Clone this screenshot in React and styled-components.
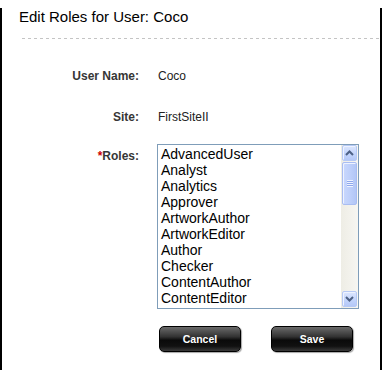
import React from 'react';
import styled, { createGlobalStyle } from 'styled-components';

const GlobalStyle = createGlobalStyle`
  html, body {
    margin: 0;
    padding: 0;
    background: #fff;
  }
  body {
    font-family: "Liberation Sans", Arial, sans-serif;
  }
`;

const Frame = styled.div`
  width: 382px;
  height: 370px;
  box-sizing: border-box;
  border: 2px solid #000;
  border-top: none;
  background: #fff;
`;

const Title = styled.h1`
  margin: 8px 0 0 17px;
  font-size: 15px;
  line-height: 18px;
  font-weight: normal;
  color: #000;
`;

const Divider = styled.div`
  margin: 12px 0 0 20px;
  height: 1px;
  background: repeating-linear-gradient(to right, #c4c4c4 0 3px, transparent 3px 6px);
`;

const Row = styled.div`
  display: grid;
  grid-template-columns: 137px auto;
  column-gap: 18px;
  align-items: start;
  margin-top: ${p => p.$gap}px;
`;

const Label = styled.label`
  text-align: right;
  font-size: 12px;
  line-height: 16px;
  font-weight: bold;
  color: #363636;
  padding-top: ${p => p.$offset || 0}px;
  .req {
    color: #c00;
  }
`;

const Value = styled.div`
  font-size: 12px;
  line-height: 16px;
  color: #222;
  padding-left: 1px;
`;

const ListBox = styled.div`
  display: flex;
  width: 202px;
  height: 165px;
  box-sizing: border-box;
  border: 1px solid #7f9db9;
  background: #fff;
`;

const Options = styled.ul`
  flex: 1;
  margin: 0;
  padding: 1px 0 0 3px;
  list-style: none;
  overflow: hidden;
`;

const Option = styled.li`
  font-size: 14px;
  line-height: 16px;
  color: #000;
  white-space: nowrap;
`;

const ScrollBar = styled.div`
  width: 17px;
  display: flex;
  flex-direction: column;
  background: linear-gradient(to right, #eeede5, #f7f6f2);
`;

const ScrollButton = styled.div`
  height: 16px;
  margin: 0 1px ${p => (p.$down ? 1 : 0)}px 1px;
  box-sizing: border-box;
  border: 1px solid #b6c9f5;
  border-radius: 2px;
  background: linear-gradient(to bottom, #dce6fe, #c1d3fb 60%, #b4c8f7);
  display: flex;
  align-items: center;
  justify-content: center;
  box-shadow: inset 1px 1px 0 #eef3ff;
`;

const Thumb = styled.div`
  height: 43px;
  margin: 1px 1px 0 1px;
  box-sizing: border-box;
  border: 1px solid #a9bdf2;
  border-radius: 2px;
  background: linear-gradient(to right, #c9d8fd, #bccefa 60%, #b2c6f6);
  box-shadow: inset 1px 1px 0 #eef3ff;
  display: flex;
  align-items: center;
  justify-content: center;
`;

const Grip = styled.span`
  width: 6px;
  height: 7px;
  background: repeating-linear-gradient(to bottom, #eef3ff 0 1px, #8fa8ec 1px 2px);
`;

const Track = styled.div`
  flex: 1;
`;

const ButtonRow = styled.div`
  display: flex;
  gap: 30px;
  padding-left: 2px;
`;

const Button = styled.button`
  width: 82px;
  height: 26px;
  padding: 0;
  border: 1px solid #000;
  border-radius: 5px;
  background: linear-gradient(to bottom, #6a6a6a 0%, #333 40%, #0a0a0a 55%, #111 80%, #3a3a3a 100%);
  box-shadow: 1px 1px 1px rgba(0, 0, 0, 0.35);
  color: #fff;
  font-family: "Liberation Sans", Arial, sans-serif;
  font-size: 10.5px;
  font-weight: bold;
  cursor: pointer;
`;

const Chevron = ({ down }) => (
  <svg width="9" height="6" viewBox="0 0 9 6">
    <path
      d={down ? 'M1 1 L4.5 4.5 L8 1' : 'M1 5 L4.5 1.5 L8 5'}
      stroke="#4d6185"
      strokeWidth="2"
      fill="none"
    />
  </svg>
);

const roles = [
  'AdvancedUser',
  'Analyst',
  'Analytics',
  'Approver',
  'ArtworkAuthor',
  'ArtworkEditor',
  'Author',
  'Checker',
  'ContentAuthor',
  'ContentEditor',
];

const App = () => (
  <>
    <GlobalStyle />
    <Frame>
      <Title>Edit Roles for User: Coco</Title>
      <Divider />
      <Row $gap={29}>
        <Label>User Name:</Label>
        <Value>Coco</Value>
      </Row>
      <Row $gap={25}>
        <Label>Site:</Label>
        <Value>FirstSiteII</Value>
      </Row>
      <Row $gap={19}>
        <Label $offset={4}>
          <span className="req">*</span>Roles:
        </Label>
        <ListBox>
          <Options>
            {roles.map(r => (
              <Option key={r}>{r}</Option>
            ))}
          </Options>
          <ScrollBar>
            <ScrollButton>
              <Chevron />
            </ScrollButton>
            <Thumb>
              <Grip />
            </Thumb>
            <Track />
            <ScrollButton $down>
              <Chevron down />
            </ScrollButton>
          </ScrollBar>
        </ListBox>
      </Row>
      <Row $gap={17}>
        <span />
        <ButtonRow>
          <Button>Cancel</Button>
          <Button>Save</Button>
        </ButtonRow>
      </Row>
    </Frame>
  </>
);

export default App;
